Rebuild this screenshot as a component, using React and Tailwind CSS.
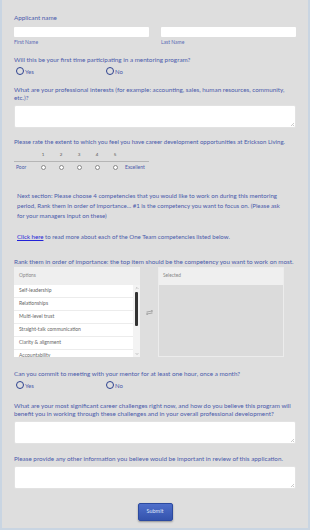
import React from "react";
import { ChevronUp, ChevronDown } from "lucide-react";

const labelCls = "text-[6.3px] leading-[8px] text-[#4b5bab]";

const BigRadio = ({ label }) => (
  <label className="flex items-center gap-[1px]">
    <span className="w-[8px] h-[8px] rounded-full border-[1.5px] border-[#2d4290] bg-transparent" />
    <span className="text-[6px] text-[#4b5bab]">{label}</span>
  </label>
);

const YesNo = () => (
  <div className="flex mt-[3px] pl-[2px]">
    <div className="w-[90px]">
      <BigRadio label="Yes" />
    </div>
    <BigRadio label="No" />
  </div>
);

const TextArea = ({ h = "h-[23px]" }) => (
  <div className={`relative ${h} bg-white rounded-[2px] border border-[#e2e2e2]`}>
    <svg className="absolute right-[1px] bottom-[1px]" width="4" height="4" viewBox="0 0 4 4">
      <path d="M4 1 L1 4 M4 3 L3 4" stroke="#999" strokeWidth="0.5" />
    </svg>
  </div>
);

const options = [
  "Self-leadership",
  "Relationships",
  "Multi-level trust",
  "Straight-talk communication",
  "Clarity & alignment",
  "Accountability",
];

export default function App() {
  return (
    <div
      className="w-[310px] h-[530px] bg-[#dedede] border-l-2 border-r-2 border-b-2 border-[#c9d5e2] overflow-hidden"
      style={{ fontFamily: "Lato, 'Open Sans', sans-serif" }}
    >
      <div className="px-[12px] pt-[14px]">
        <div className={labelCls}>Applicant name</div>
        <div className="flex gap-[12px] mt-[5px]">
          <div className="flex-1">
            <div className="h-[10px] bg-white rounded-[1px]" />
            <div className="text-[5px] text-[#5b6bb5] mt-[2px]">First Name</div>
          </div>
          <div className="flex-1">
            <div className="h-[10px] bg-white rounded-[1px]" />
            <div className="text-[5px] text-[#5b6bb5] mt-[2px]">Last Name</div>
          </div>
        </div>

        <div className={`${labelCls} mt-[9px]`}>Will this be your first time participating in a mentoring program?</div>
        <YesNo />

        <div className={`${labelCls} mt-[10px]`}>
          What are your professional interests (for example: accounting, sales, human resources, community, etc.)?
        </div>
        <div className="mt-[3px]">
          <TextArea />
        </div>

        <div className="text-[6.05px] leading-[8px] text-[#4b5bab] mt-[10px] whitespace-nowrap">
          Please rate the extent to which you feel you have career development opportunities at Erickson Living.
        </div>
        <div className="w-[135px] mt-[6px]">
          <div className="flex items-center h-[10px] border-b border-[#b5b5b5] pb-[2px] pl-[20px]">
            {[1, 2, 3, 4, 5].map((n) => (
              <span key={n} className="w-[18px] text-center text-[4.5px] text-[#555]">
                {n}
              </span>
            ))}
          </div>
          <div className="flex items-center h-[12px] pl-[2px]">
            <span className="w-[18px] text-[5px] text-[#4b5bab]">Poor</span>
            {[1, 2, 3, 4, 5].map((n) => (
              <span key={n} className="w-[18px] flex justify-center">
                <span className="w-[5px] h-[5px] rounded-full bg-white border-[0.5px] border-[#888]" />
              </span>
            ))}
            <span className="text-[5px] text-[#4b5bab] ml-[1px]">Excellent</span>
          </div>
        </div>

        <div className="px-[3px] pr-[10px] mt-[17px] text-[6.1px] leading-[10px] text-[#4b5bab]">
          Next section: Please choose 4 competencies that you would like to work on during this mentoring period, Rank them in order of importance... #1 is the competency you want to focus on. (Please ask for your managers input on these)
        </div>
        <div className="px-[3px] mt-[11px] text-[6.1px] leading-[10px] text-[#4b5bab]">
          <span className="underline text-[#2323d8]">Click here</span> to read more about each of the One Team competencies listed below.
        </div>

        <div className={`${labelCls} mt-[16px]`}>
          Rank them in order of importance: the top item should be the competency you want to work on most.
        </div>
        <div className="flex items-start mt-[1px]">
          <div className="w-[126px] h-[90px] bg-white flex flex-col overflow-hidden">
            <div className="h-[18px] bg-[#efefef] text-[4.8px] text-[#888] flex items-center pl-[5px]">Options</div>
            <div className="flex flex-1 overflow-hidden">
              <div className="flex-1 overflow-hidden">
                {options.map((o) => (
                  <div
                    key={o}
                    className="h-[13px] border-b border-[#ececec] text-[5px] text-[#666] flex items-center pl-[5px]"
                  >
                    {o}
                  </div>
                ))}
              </div>
              <div className="w-[7px] flex flex-col items-center bg-[#f3f3f3]">
                <ChevronUp size={4} strokeWidth={3} color="#888" className="mt-[1px]" />
                <div className="w-[3px] h-[34px] bg-[#333] rounded-[1px] mt-[2px]" />
                <div className="flex-1" />
                <ChevronDown size={4} strokeWidth={3} color="#888" className="mb-[1px]" />
              </div>
            </div>
          </div>
          <div className="w-[18px] h-[90px] flex items-center justify-center">
            <svg width="7" height="5" viewBox="0 0 7 5" className="mt-[2px]">
              <path d="M0.5 2 L6.5 1 M5 0 L6.5 1 L5.3 2 M6.5 3 L0.5 4 M2 5 L0.5 4 L1.7 3" stroke="#a0a0a0" strokeWidth="0.9" fill="none" />
            </svg>
          </div>
          <div className="w-[126px] h-[90px] flex flex-col border border-[#ececec]">
            <div className="h-[17px] bg-[#efefef] text-[4.8px] text-[#888] flex items-center pl-[4px]">Selected</div>
            <div className="flex-1 bg-[#dbdbdb]" />
          </div>
        </div>

        <div className={`${labelCls} mt-[13px]`}>Can you commit to meeting with your mentor for at least one hour, once a month?</div>
        <YesNo />

        <div className={`${labelCls} mt-[12px]`}>
          What are your most significant career challenges right now, and how do you believe this program will benefit you in working through these challenges and in your overall professional development?
        </div>
        <div className="mt-[3px]">
          <TextArea />
        </div>

        <div className={`${labelCls} mt-[11px]`}>
          Please provide any other information you believe would be important in review of this application.
        </div>
        <div className="mt-[3px]">
          <TextArea />
        </div>

        <div className="flex justify-center mt-[14px]">
          <button className="w-[35px] h-[18px] rounded-[2px] bg-gradient-to-b from-[#4f6fcb] to-[#3453ad] border border-[#2c4a9f] shadow-[0_1px_2px_rgba(0,0,0,0.35)] text-[5.5px] text-[#dfe6f8]">
            Submit
          </button>
        </div>
      </div>
    </div>
  );
}
